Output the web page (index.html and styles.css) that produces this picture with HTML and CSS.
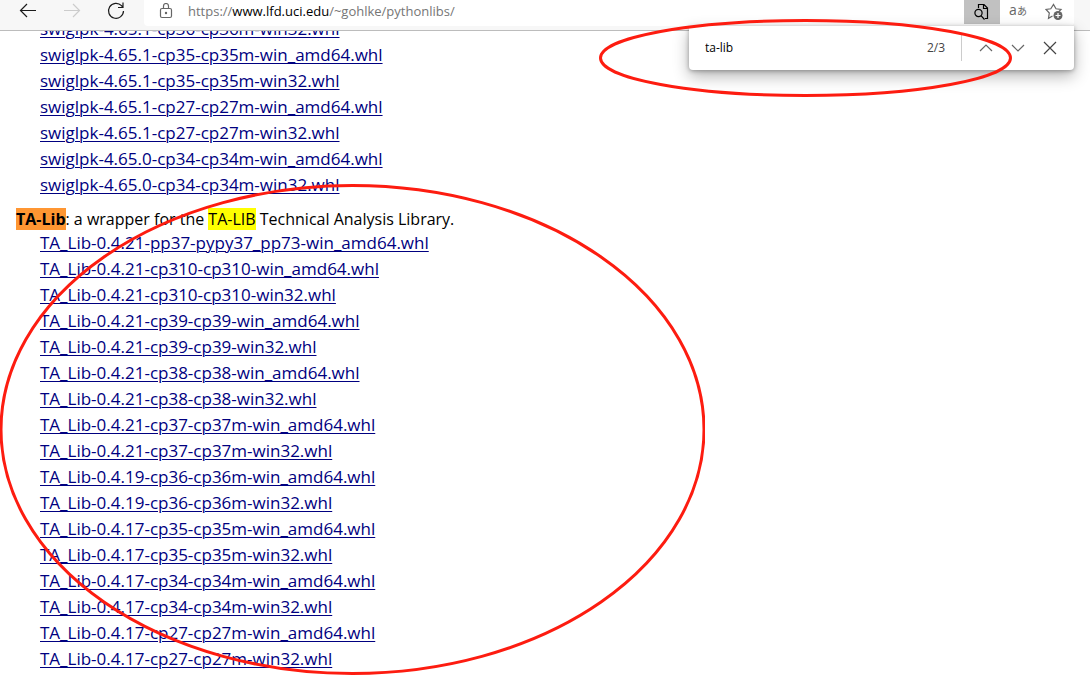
FILE: index.html
```
<!DOCTYPE html>
<html lang="en">
<head>
<meta charset="utf-8">
<title>Python Extension Packages</title>
<link rel="stylesheet" href="styles.css">
</head>
<body>
<div class="browser">
  <header class="toolbar">
    <nav class="nav" aria-label="Navigation">
      <button class="icon-button" aria-label="Back"><svg width="18" height="18" viewBox="0 0 18 18"><path d="M17 8.500H1.500M8 2L1.500 8.500L8 15"/></svg></button>
      <button class="icon-button disabled" aria-label="Forward" disabled><svg width="18" height="18" viewBox="0 0 18 18"><path d="M1 8.500H16.500M10 2L16.500 8.500L10 15"/></svg></button>
      <button class="icon-button" aria-label="Refresh"><svg width="18" height="20" viewBox="0 0 18 20"><path d="M16.500 10A7.500 7.500 0 1 1 14.500 4.700L16 6.500M16 1.500V6.500H11"/></svg></button>
    </nav>
    <div class="address">
      <svg class="lock" width="14" height="18" viewBox="0 0 14 18"><rect x="1.500" y="5.500" width="11" height="9" rx="1.500"/><path d="M4.500 5.500V3A2.500 2.500 0 0 1 9.500 3V5.500"/><circle cx="7" cy="10" r=".6"/></svg>
      <div class="url"><span>https://</span><b>www.lfd.uci.edu</b><span>/~gohlke/pythonlibs/</span></div>
      <div class="tools">
        <button class="tool active" aria-label="Find on page"><svg width="16" height="18" viewBox="0 0 16 18"><path d="M4.500 5V1.500H10L13.500 5V15.500H11M9.500 1.500V5.500H13.500"/><circle cx="4.500" cy="10" r="3.600"/><path d="M7 12.600L10.500 16.500"/></svg></button>
        <button class="tool" aria-label="Translate"><span class="translate">a<small>あ</small></span></button>
        <button class="tool" aria-label="Add to favorites"><svg width="19" height="18" viewBox="0 0 19 18"><path d="M7.500 13L3.500 15.300L4.300 10L1 6.500L5.800 5.800L8.500 1.500L11 5.800L16 6.500L14 8.500"/><circle class="filled" cx="13" cy="12.500" r="4.500"/><path class="plus" d="M13 10V15M10.500 12.500H15.500"/></svg></button>
      </div>
    </div>
  </header>
  <form class="find" role="search">
    <input class="find-input" type="text" value="ta-lib" aria-label="Find on page">
    <output class="count">2/3</output>
    <button type="button" class="find-button" aria-label="Previous"><svg width="14" height="14" viewBox="0 0 14 14"><path d="M1 10L7 4L13 10"/></svg></button>
    <button type="button" class="find-button" aria-label="Next"><svg width="14" height="14" viewBox="0 0 14 14"><path d="M1 4L7 10L13 4"/></svg></button>
    <button type="button" class="find-button dark" aria-label="Close"><svg width="14" height="14" viewBox="0 0 14 14"><path d="M1 1L13 13M13 1L1 13"/></svg></button>
  </form>
  <main class="page">
    <ul class="files first">
      <li><a href="#">swiglpk-4.65.1-cp36-cp36m-win32.whl</a></li>
      <li><a href="#">swiglpk-4.65.1-cp35-cp35m-win_amd64.whl</a></li>
      <li><a href="#">swiglpk-4.65.1-cp35-cp35m-win32.whl</a></li>
      <li><a href="#">swiglpk-4.65.1-cp27-cp27m-win_amd64.whl</a></li>
      <li><a href="#">swiglpk-4.65.1-cp27-cp27m-win32.whl</a></li>
      <li><a href="#">swiglpk-4.65.0-cp34-cp34m-win_amd64.whl</a></li>
      <li><a href="#">swiglpk-4.65.0-cp34-cp34m-win32.whl</a></li>
    </ul>
    <p class="package"><strong><mark class="current">TA-Lib</mark></strong>: a wrapper for the <mark>TA-LIB</mark> Technical Analysis Library.</p>
    <ul class="files">
      <li><a href="#">TA_Lib-0.4.21-pp37-pypy37_pp73-win_amd64.whl</a></li>
      <li><a href="#">TA_Lib-0.4.21-cp310-cp310-win_amd64.whl</a></li>
      <li><a href="#">TA_Lib-0.4.21-cp310-cp310-win32.whl</a></li>
      <li><a href="#">TA_Lib-0.4.21-cp39-cp39-win_amd64.whl</a></li>
      <li><a href="#">TA_Lib-0.4.21-cp39-cp39-win32.whl</a></li>
      <li><a href="#">TA_Lib-0.4.21-cp38-cp38-win_amd64.whl</a></li>
      <li><a href="#">TA_Lib-0.4.21-cp38-cp38-win32.whl</a></li>
      <li><a href="#">TA_Lib-0.4.21-cp37-cp37m-win_amd64.whl</a></li>
      <li><a href="#">TA_Lib-0.4.21-cp37-cp37m-win32.whl</a></li>
      <li><a href="#">TA_Lib-0.4.19-cp36-cp36m-win_amd64.whl</a></li>
      <li><a href="#">TA_Lib-0.4.19-cp36-cp36m-win32.whl</a></li>
      <li><a href="#">TA_Lib-0.4.17-cp35-cp35m-win_amd64.whl</a></li>
      <li><a href="#">TA_Lib-0.4.17-cp35-cp35m-win32.whl</a></li>
      <li><a href="#">TA_Lib-0.4.17-cp34-cp34m-win_amd64.whl</a></li>
      <li><a href="#">TA_Lib-0.4.17-cp34-cp34m-win32.whl</a></li>
      <li><a href="#">TA_Lib-0.4.17-cp27-cp27m-win_amd64.whl</a></li>
      <li><a href="#">TA_Lib-0.4.17-cp27-cp27m-win32.whl</a></li>
    </ul>
  </main>
  <svg class="marks list-mark" width="706" height="491" viewBox="0 0 706 491" aria-hidden="true"><ellipse cx="353.500" cy="245.500" rx="351.500" ry="244"/></svg>
  <svg class="marks find-mark" width="414" height="78" viewBox="0 0 414 78" aria-hidden="true"><ellipse cx="206.500" cy="39" rx="205" ry="37.500"/></svg>
</div>
</body>
</html>
```
FILE: styles.css
```
* { box-sizing: border-box; }
body { margin: 0; background: #fff; color: #000; font-family: "Segoe UI", "Open Sans", "Noto Sans", sans-serif; font-size: 16px; }
button { border: 0; padding: 0; margin: 0; background: none; color: inherit; font: inherit; display: flex; align-items: center; justify-content: center; }
svg { display: block; fill: none; stroke: currentColor; stroke-width: 1.2; }
.browser { position: relative; height: 100vh; display: flex; flex-direction: column; overflow: hidden; }
.toolbar { flex: none; display: flex; height: 31px; padding-right: 16px; background: #f7f7f7; border-bottom: 1px solid #bcbcbc; }
.nav { display: flex; flex: none; align-items: flex-start; gap: 26px; width: 144px; padding: 1px 0 0 19px; }
.icon-button { width: 18px; height: 20px; color: #1b1b1b; }
.disabled { color: #ccc; }
.address { flex: 1; display: flex; align-items: flex-start; height: 26px; padding-left: 15px; background: #fff; border-radius: 0 0 4px 4px; }
.lock { flex: none; margin-top: 3px; color: #666; }
.url { flex: 1; padding: 2px 0 0 15px; font-size: 13px; line-height: 18px; color: #767676; }
.url b { font-weight: 400; color: #000; }
.tools { display: flex; padding-right: 2px; }
.tool { width: 36px; height: 24px; color: #666; }
.active { background: #c1c1c1; color: #000; }
.translate { padding-bottom: 4px; font-family: "Segoe UI", "Open Sans", "Noto Sans CJK JP", sans-serif; font-size: 14px; line-height: 16px; }
.translate small { font-size: 10px; }
.filled { fill: #666; stroke: none; }
.plus { stroke: #fff; }
.find { position: absolute; z-index: 1; top: 26px; right: 16px; display: flex; align-items: center; width: 385px; height: 44px; padding: 0 8px 0 16px; background: #fff; border-radius: 0 0 4px 4px; box-shadow: 0 6px 16px rgba(0,0,0,.3), 0 1px 4px rgba(0,0,0,.3); }
.find-input { flex: 1; min-width: 0; padding: 0; border: 0; outline: 0; background: none; font: 12px/16px "Segoe UI", "Open Sans", sans-serif; color: #000; }
.count { padding: 5px 16px 5px 0; margin-right: 8px; border-right: 1px solid #ccc; font-size: 12px; line-height: 16px; color: #444; }
.find-button { width: 32px; height: 32px; color: #666; }
.dark { color: #444; }
.page { flex: 1; min-height: 0; overflow: hidden; padding: 0 16px; }
.files { margin: 0; padding: 0 0 0 24px; list-style: none; font-size: 17px; line-height: 26px; }
.first { margin-top: -15px; }
.files a { color: #000080; text-decoration-thickness: 1px; text-underline-offset: 2px; }
.package { margin: 10px 0 0; line-height: 22px; }
mark { background: #ff0; color: #000; }
.current { background: #ff9632; }
.marks { position: absolute; z-index: 2; pointer-events: none; color: #fd1c10; stroke-width: 3; }
.list-mark { left: -1px; top: 184px; }
.find-mark { left: 599px; top: 19px; }
```
